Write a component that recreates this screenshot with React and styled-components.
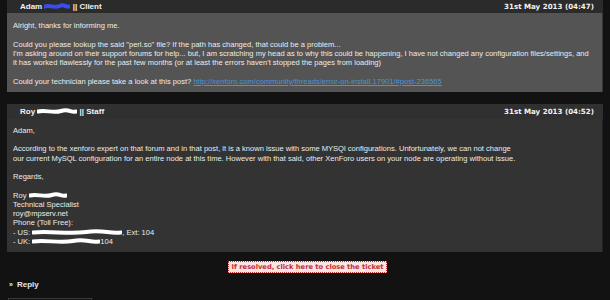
import React from "react";
import styled, { createGlobalStyle } from "styled-components";

const Global = createGlobalStyle`
  html, body { margin: 0; padding: 0; background: #121212; }
  body { width: 610px; height: 300px; overflow: hidden; font-family: "Liberation Sans", Arial, sans-serif; }
`;

const Page = styled.div`
  display: flex;
  flex-direction: column;
  padding: 0 7px 0 7px;
`;

const Panel = styled.div`
  display: flex;
  flex-direction: column;
  width: 596px;
  margin-top: ${(p) => p.$mt || 0}px;
  background: ${(p) => p.$bg};
  box-shadow: inset -1px 0 0 rgba(0,0,0,0.35);
`;

const Header = styled.div`
  display: flex;
  justify-content: space-between;
  align-items: center;
  height: ${(p) => p.$h}px;
  padding: 0 9px 0 ${(p) => p.$pl}px;
  background: ${(p) => p.$bg};
  color: #f2f2f2;
  font-weight: bold;
  font-size: 8px;
`;

const Name = styled.span`
  display: flex;
  align-items: center;
  white-space: pre;
`;

const DateText = styled.span`
  font-family: "DejaVu Sans", Verdana, sans-serif;
  font-size: 7.1px;
  font-weight: bold;
`;

const Body = styled.div`
  padding: ${(p) => p.$pt}px 6px 6px 6px;
  color: #ececec;
  font-size: 7.55px;
  line-height: 9.25px;
`;

const Para = styled.p`
  margin: 0 0 9.25px 0;
  white-space: nowrap;
  &:last-child { margin-bottom: 0; }
`;

const Line = styled.div`
  display: flex;
  align-items: center;
  white-space: pre;
  height: 9.25px;
`;

const Link = styled.a`
  color: #4a94d6;
  text-decoration: underline;
`;

const Scribble = styled.svg`
  display: inline-block;
  flex: none;
  vertical-align: middle;
`;

const Redact = ({ w, color = "#fff" }) => (
  <Scribble width={w} height="7" viewBox={`0 0 ${w} 7`}>
    <path
      d={`M1 3.5 C ${w * 0.2} 1.5, ${w * 0.4} 5.5, ${w * 0.6} 3 S ${w * 0.85} 5, ${w - 1} 3.5`}
      stroke={color}
      strokeWidth="4"
      strokeLinecap="round"
      fill="none"
    />
  </Scribble>
);

const Center = styled.div`
  display: flex;
  justify-content: center;
  margin-top: 9px;
`;

const CloseBtn = styled.span`
  display: inline-block;
  padding: 1px 3px;
  background: #fbe3e3;
  border: 1px dotted #b33;
  color: #c0302f;
  font-family: "DejaVu Sans", Verdana, sans-serif;
  font-weight: bold;
  font-size: 6.7px;
  line-height: 8px;
  margin-left: 5px;
`;

const Reply = styled.div`
  display: flex;
  align-items: center;
  gap: 4px;
  margin-top: 7px;
  padding-left: 2px;
  color: #e8e8e8;
  font-weight: bold;
  font-size: 8px;
`;

const Arrow = styled.span`
  font-size: 7px;
`;

const Editor = styled.div`
  margin-top: 9px;
  width: 82px;
  height: 8px;
  border: 1px solid #3a3a3a;
  border-bottom: none;
  margin-left: 1px;
`;

export default function App() {
  return (
    <>
      <Global />
      <Page>
        <Panel $bg="#545454">
          <Header $h={13} $pl={13} $bg="#2b2b2b">
            <Name>
              Adam <Redact w={26} color="#3a4cf0" /> || Client
            </Name>
            <DateText>31st May 2013 (04:47)</DateText>
          </Header>
          <Body $pt={8}>
            <Para>Alright, thanks for informing me.</Para>
            <Para>
              Could you please lookup the said "perl.so" file? If the path has changed, that could be a problem...
              <br />
              I'm asking around on their support forums for help... but, I am scratching my head as to why this could be happening, I have not changed any configuration files/settings, and
              <br />
              it has worked flawlessly for the past few months (or at least the errors haven't stopped the pages from loading)
            </Para>
            <Para>
              Could your technician please take a look at this post?{" "}
              <Link href="#">http://xenforo.com/community/threads/error-on-install.17901/#post-236565</Link>
            </Para>
          </Body>
        </Panel>

        <Panel $bg="#333333" $mt={12}>
          <Header $h={15} $pl={13} $bg="#303030">
            <Name>
              Roy <Redact w={40} /> || Staff
            </Name>
            <DateText>31st May 2013 (04:52)</DateText>
          </Header>
          <Body $pt={7}>
            <Para>Adam,</Para>
            <Para>
              According to the xenforo expert on that forum and in that post, it is a known issue with some MYSQl configurations. Unfortunately, we can not change
              <br />
              our current MySQL configuration for an entire node at this time. However with that said, other XenForo users on your node are operating without issue.
            </Para>
            <Para>Regards,</Para>
            <Para>
              <Line>
                Roy <Redact w={38} />
              </Line>
              <Line>Technical Specialist</Line>
              <Line>roy@mpserv.net</Line>
              <Line>Phone (Toll Free):</Line>
              <Line>
                - US: <Redact w={90} />, Ext: 104
              </Line>
              <Line>
                - UK: <Redact w={68} />104
              </Line>
            </Para>
          </Body>
        </Panel>

        <Center>
          <CloseBtn>If resolved, click here to close the ticket</CloseBtn>
        </Center>

        <Reply>
          <Arrow>»</Arrow> Reply
        </Reply>
        <Editor />
      </Page>
    </>
  );
}
